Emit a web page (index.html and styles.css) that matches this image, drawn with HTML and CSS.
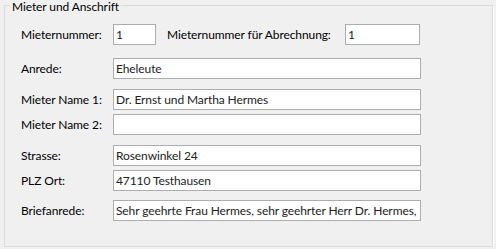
FILE: index.html
```html
<!DOCTYPE html>
<html>
<head>
  <title>Mieter und Anschrift</title>
  <link rel="stylesheet" href="styles.css">
</head>
<body>
  <fieldset class="group">
    <legend>Mieter und Anschrift</legend>
    <div class="form">
      <div class="row">
        <label class="caption" for="mieternr">Mieternummer:</label>
        <input type="text" id="mieternr" class="field num" value="1">
        <label class="caption wide" for="abrechnungnr">Mieternummer für Abrechnung:</label>
        <input type="text" id="abrechnungnr" class="field num2" value="1">
      </div>
      <div class="row first-gap">
        <label class="caption" for="anrede">Anrede:</label>
        <input type="text" id="anrede" class="field" value="Eheleute">
      </div>
      <div class="row sep">
        <label class="caption" for="name1">Mieter Name 1:</label>
        <input type="text" id="name1" class="field" value="Dr. Ernst und Martha Hermes">
      </div>
      <div class="row tight">
        <label class="caption" for="name2">Mieter Name 2:</label>
        <input type="text" id="name2" class="field" value="">
      </div>
      <div class="row sep">
        <label class="caption" for="strasse">Strasse:</label>
        <input type="text" id="strasse" class="field" value="Rosenwinkel 24">
      </div>
      <div class="row tight">
        <label class="caption" for="plzort">PLZ Ort:</label>
        <input type="text" id="plzort" class="field" value="47110 Testhausen">
      </div>
      <div class="row last-gap">
        <label class="caption" for="briefanrede">Briefanrede:</label>
        <input type="text" id="briefanrede" class="field" value="Sehr geehrte Frau Hermes, sehr geehrter Herr Dr. Hermes,">
      </div>
    </div>
  </fieldset>
</body>
</html>
```

FILE: styles.css
```css
body {
  margin: 0;
  background-color: #f0f0f0;
  font-family: Lato, "Liberation Sans", sans-serif;
  font-size: 12px;
  letter-spacing: -0.1px;
  color: #000;
}

.group {
  box-sizing: border-box;
  width: 489px;
  height: 249px;
  margin: -2px 0 0 4px;
  padding: 0;
  border: 1px solid #dcdcdc;
  box-shadow: 1px 1px 0 #fff;
}

.group legend {
  margin-left: 5px;
  padding: 2px 2px 0;
  line-height: 13px;
}

.form {
  display: flex;
  flex-direction: column;
  padding: 11px 0 0 16px;
}

.row {
  display: flex;
  align-items: center;
  height: 21px;
}

.row.first-gap {
  margin-top: 13px;
}

.row.sep {
  margin-top: 10px;
}

.row.tight {
  margin-top: 4px;
}

.row.last-gap {
  margin-top: 9px;
}

.caption {
  width: 92px;
  flex-shrink: 0;
  white-space: nowrap;
}

.caption.wide {
  width: 178px;
  margin-left: 11px;
}

.field {
  box-sizing: border-box;
  width: 308px;
  height: 21px;
  margin: 0;
  padding: 0 2px;
  border: 1px solid #adadad;
  background-color: #fff;
  font-family: inherit;
  font-size: 12px;
  letter-spacing: inherit;
  color: #222;
  outline: none;
}

.field.num {
  width: 43px;
}

.field.num2 {
  width: 75px;
}
```
